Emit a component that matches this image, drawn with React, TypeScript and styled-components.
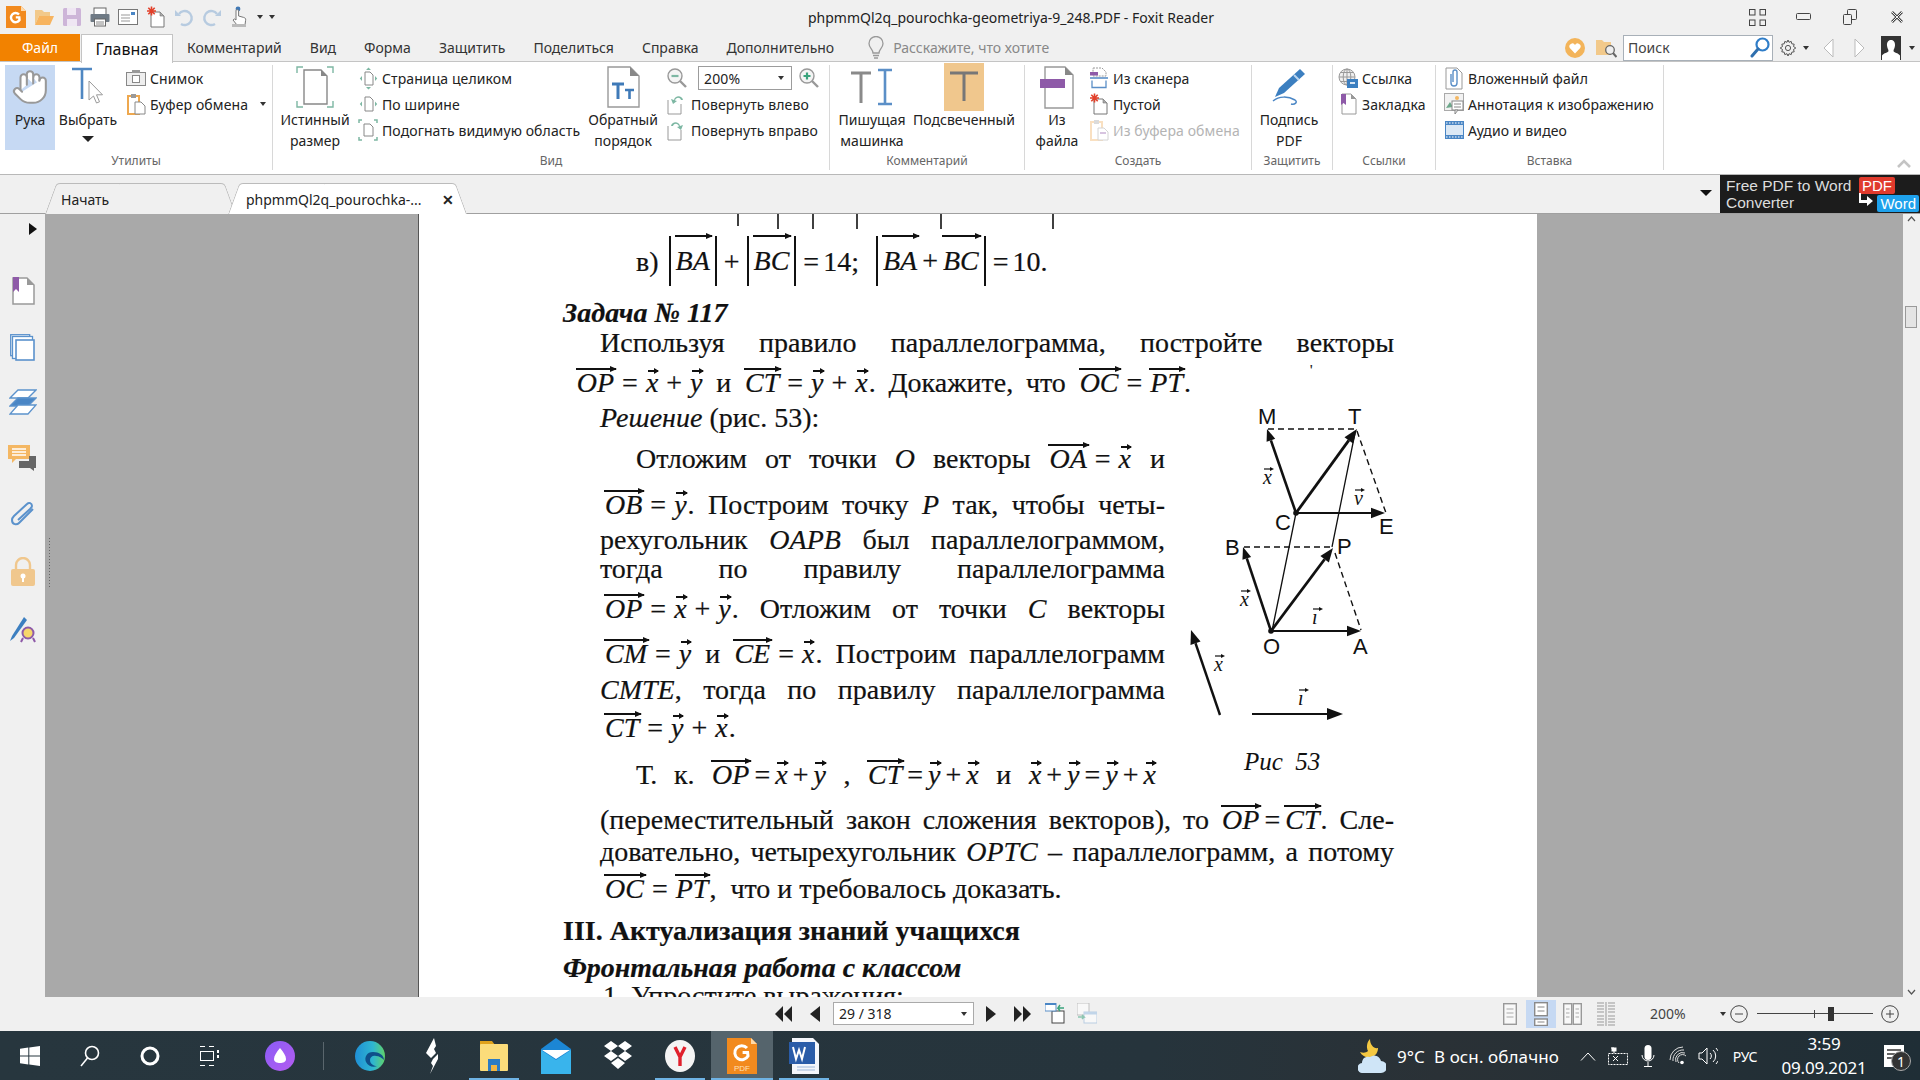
import React from "react";
import styled, { createGlobalStyle } from "styled-components";
import { Hand } from "lucide-react";

const Global = createGlobalStyle`
  html, body { margin: 0; padding: 0; overflow: hidden; background: #f0f0f0; }
  * { box-sizing: border-box; }
  svg { display: block; flex: none; }
`;
const UI = `"Noto Sans", "Open Sans", sans-serif`;

const Window = styled.div`
  width: 1920px; height: 1080px; display: flex; flex-direction: column; overflow: hidden;
  background: #f0f0f0; font-family: ${UI}; color: #222;
`;

/* ---------- title bar ---------- */
const TitleBar = styled.div`height: 34px; display: flex; align-items: center; flex: none;`;
const QuickAccess = styled.div`width: 808px; flex: none; display: flex; align-items: center; padding-left: 2px;`;
const QuickCell = styled.div<{ $w?: number }>`width: ${p => p.$w || 28}px; display: flex; align-items: center; justify-content: center; flex: none;`;
const TitleText = styled.div`font-size: 14px; color: #222; white-space: nowrap;`;
const WindowControls = styled.div`margin-left: auto; display: flex; align-items: center;`;
const WinCell = styled.div`width: 46.5px; display: flex; justify-content: center;`;

/* ---------- menu bar ---------- */
const MenuBar = styled.div`
  height: 28px; flex: none; display: flex; align-items: stretch; position: relative;
  border-bottom: 1px solid #c4c4c4; font-size: 14px;
`;
const FileTab = styled.div`
  width: 80px; background: #f28200; color: #fff; display: flex; align-items: center; justify-content: center; font-size: 14px; margin-right: 1px;
`;
const HomeTab = styled.div`
  width: 92px; height: 29px; background: #fff; border: 1px solid #c4c4c4; border-bottom: none; color: #111;
  display: flex; align-items: center; justify-content: center; font-size: 16px; margin-right: 0px; z-index: 1;
`;
const MenuItem = styled.div`padding: 0 14px; display: flex; align-items: center; white-space: nowrap; color: #333;`;
const TellMe = styled.div`display: flex; align-items: center; gap: 9px; margin-left: 20px; color: #888;`;
const TellMeText = styled.div`width: 165px; overflow: hidden; white-space: nowrap;`;
const MenuRight = styled.div`margin-left: auto; display: flex; align-items: center;`;
const ToolSlot = styled.div<{ $w: number }>`width: ${p => p.$w}px; display: flex; align-items: center; justify-content: center; gap: 6px;`;
const SearchBox = styled.div`
  width: 150px; height: 26px; border: 1px solid #a8b0b8; background: #fff; display: flex; align-items: center;
  justify-content: space-between; padding: 0 2px 0 4px; font-size: 14px; color: #444;
`;
const Caret = styled.span<{ $c?: string; $s?: number }>`
  display: inline-block; width: 0; height: 0; border-left: ${p => p.$s || 3.5}px solid transparent; border-right: ${p => p.$s || 3.5}px solid transparent;
  border-top: ${p => (p.$s || 3.5) + 0.5}px solid ${p => p.$c || "#333"}; flex: none;
`;

/* ---------- ribbon ---------- */
const Ribbon = styled.div`
  height: 113px; flex: none; background: #fff; display: flex; border-bottom: 1px solid #b8b8b8; padding-top: 3px; position: relative;
`;
const Group = styled.div<{ $w: number }>`
  width: ${p => p.$w}px; height: 105px; flex: none; display: flex; flex-direction: column; border-right: 1px solid #d8d8d8;
`;
const GroupBody = styled.div<{ $pl: number; $gap: number }>`
  height: 87px; display: flex; padding-left: ${p => p.$pl}px; gap: ${p => p.$gap}px; align-items: flex-start;
`;
const GroupLabel = styled.div`height: 18px; text-align: center; font-size: 12px; color: #666; line-height: 18px;`;
const LargeBtn = styled.div<{ $w: number; $on?: boolean }>`
  width: ${p => p.$w}px; height: 85px; display: flex; flex-direction: column; align-items: center; font-size: 14px; color: #222;
  line-height: 21px; text-align: center; background: ${p => (p.$on ? "#c6d9f3" : "transparent")}; white-space: nowrap;
`;
const BtnCaret = styled.div`margin-top: 6px; line-height: 0;`;
const IconArea = styled.div`height: 44px; display: flex; align-items: center; justify-content: center; flex: none;`;
const SmallCol = styled.div<{ $ml?: number }>`display: flex; flex-direction: column; margin-left: ${p => p.$ml || 0}px;`;
const SmallItem = styled.div<{ $off?: boolean }>`
  height: 26px; display: flex; align-items: center; gap: 4px; font-size: 14px; white-space: nowrap; letter-spacing: 0.1px;
  color: ${p => (p.$off ? "#b4b4b4" : "#222")};
`;
const IconSlot = styled.div`width: 20px; display: flex; justify-content: center; flex: none;`;
const ZoomCombo = styled.div`
  width: 94px; height: 24px; border: 1px solid #9c9c9c; margin: 0 3px 0 7px; display: flex; align-items: center;
  justify-content: space-between; padding: 0 7px 0 5px; font-size: 14px; color: #222;
`;
const Collapse = styled.div`position: absolute; right: 8px; bottom: 5px;`;

/* ---------- tabs ---------- */
const TabBar = styled.div`height: 39px; flex: none; display: flex; align-items: flex-end; position: relative; padding-left: 45px; border-bottom: 1px solid #a0a0a0;`;
const DocTab = styled.div<{ $on?: boolean; $w: number }>`
  width: ${p => p.$w}px; height: 31px; position: relative; display: flex; align-items: center; font-size: 14px;
  color: #222; margin-right: ${p => (p.$on ? 0 : -7)}px; padding: 1px 18px 0 ${p => (p.$on ? 18 : 16)}px; z-index: ${p => (p.$on ? 2 : 1)}; margin-bottom: -1px;
  &::before, &::after {
    content: ""; position: absolute; top: 0; bottom: 0; width: 55%; z-index: -1;
    background: ${p => (p.$on ? "#fff" : "#f0f0f0")}; border-top: 1px solid #bbb;
  }
  &::before { left: 0; transform: skewX(-20deg); transform-origin: bottom left; border-left: 1px solid #bbb; border-top-left-radius: 4px; }
  &::after { right: 0; transform: skewX(20deg); transform-origin: bottom right; border-right: 1px solid #bbb; border-top-right-radius: 4px; }
`;
const TabTitle = styled.span`white-space: nowrap;`;
const TabClose = styled.span`margin-left: auto; margin-right: -5px; font-size: 14px; font-weight: 700; color: #222;`;
const TabDrop = styled.div`margin-left: auto; margin-right: 8px; margin-bottom: 12px;`;
const Banner = styled.div`
  width: 200px; height: 38px; background: #1c1c1c; color: #ddd; font-size: 15.5px; line-height: 17px; padding: 2px 6px; position: relative; align-self: flex-end;
  font-family: "Liberation Sans", sans-serif; white-space: nowrap;
`;
const BannerBadge = styled.span<{ $c: string; $r: number; $t: number }>`
  position: absolute; right: ${p => p.$r}px; top: ${p => p.$t}px; background: ${p => p.$c}; color: #fff; padding: 0 3px; border-radius: 2px; font-size: 15px; line-height: 17px;
`;
const BannerArrow = styled.svg`position: absolute; right: 46px; top: 18px;`;

/* ---------- main ---------- */
const Main = styled.div`height: 783px; flex: none; display: flex; overflow: hidden;`;
const SideBar = styled.div`width: 45px; flex: none; display: flex; flex-direction: column; align-items: center; padding-top: 9px; position: relative;`;
const SideArrow = styled.div`margin: 0 0 42px 20px;`;
const SideIcons = styled.div`display: flex; flex-direction: column; gap: 28.6px; align-items: center;`;
const Canvas = styled.div<{ $w: number; $line?: boolean }>`
  width: ${p => p.$w}px; flex: none; background: #a9a9a9; position: relative;
  border-right: ${p => (p.$line ? "1px solid #555" : "none")};
`;
const SashDots = styled.div`
  position: absolute; left: 3px; top: 323px; width: 3px; height: 52px;
  background-image: radial-gradient(#666 0.7px, transparent 0.8px); background-size: 3px 3px;
`;
const Page = styled.div`
  width: 1118px; flex: none; background: #fff; overflow: hidden; padding: 0 143px 0 144px; position: relative;
  font-family: "Liberation Serif", serif; font-size: 28px; color: #111; line-height: 28px; -webkit-text-stroke: 0.2px #111;
`;
const TopMarks = styled.div`height: 16px;`;
const Line = styled.div<{ $mt?: number; $ind?: number; $j?: boolean; $pr?: number }>`
  height: 28px; margin-top: ${p => p.$mt || 0}px; padding-left: ${p => p.$ind || 0}px; padding-right: ${p => p.$pr || 0}px; white-space: nowrap; position: relative;
  ${p => (p.$j ? "text-align: justify; text-align-last: justify; white-space: normal;" : "")}
`;
const TaskTitle = styled(Line)`font-weight: 700; font-style: italic;`;
const HeadLine = styled(Line)`font-weight: 700;`;
const FigRow = styled.div`display: flex; margin-top: 7px;`;
const TextCol = styled.div`width: 602px; flex: none;`;
const Figure = styled.svg`margin-left: 15px; margin-top: 0; font-family: "Liberation Sans", sans-serif; -webkit-text-stroke: 0;`;
const Vec = styled.span`
  display: inline-block; position: relative; font-style: italic; padding: 0 1px;
  &::before { content: ""; position: absolute; left: 0; right: -1px; top: -1px; height: 1.5px; background: #111; }
  &::after { content: ""; position: absolute; right: -2px; top: -3.5px; border-left: 7px solid #111; border-top: 3px solid transparent; border-bottom: 3px solid transparent; }
`;
const Sym = styled.span`display: inline-block; position: relative; font-style: italic; padding: 0 1px;
  &::before { content: ""; position: absolute; left: 3px; right: 1px; top: 1px; height: 1.5px; background: #111; }
  &::after { content: ""; position: absolute; right: 0; top: -1px; border-left: 5px solid #111; border-top: 3px solid transparent; border-bottom: 3px solid transparent; }
`;
const Op = styled.span`margin: 0 7px;`;
const TightOp = styled.span`margin: 0 4px;`;
const Abs = styled.span`
  display: inline-block; height: 50px; line-height: 50px; vertical-align: middle; margin: -8px 3px 0;
  border-left: 2px solid #111; border-right: 2px solid #111; padding: 0 4px;
`;
const It = styled.i``;
const Scan = styled.span`position: absolute; left: 747px; top: -12px; font-size: 14px;`;
const Scroll = styled.div`width: 16px; flex: none; display: flex; flex-direction: column; align-items: center; justify-content: space-between; background: #f0f0f0; position: relative; padding: 2px 0 2px;`;
const Thumb = styled.div`position: absolute; top: 92px; left: 2px; width: 12px; height: 22px; background: #e4e4e4; border: 1px solid #999;`;

/* ---------- status bar ---------- */
const StatusBar = styled.div`height: 34px; flex: none; display: flex; align-items: center; padding-left: 775px; padding-bottom: 1px; background: #f0f0f0;`;
const StatusItem = styled.div<{ $ml: number }>`margin-left: ${p => p.$ml}px; display: flex; align-items: center; justify-content: center;`;
const PageBox = styled.div`
  width: 141px; height: 23px; border: 1px solid #aaa; background: #fff; font-size: 14px; color: #222; display: flex; align-items: center;
  justify-content: space-between; padding: 0 6px 0 5px; margin-left: 13px;
`;
const ViewSlot = styled.div<{ $w: number; $on?: boolean }>`
  width: ${p => p.$w}px; height: 28px; display: flex; align-items: center; justify-content: center; background: ${p => (p.$on ? "#c6d9f3" : "transparent")};
`;
const ZoomText = styled.div`margin-left: 28px; width: 66px; font-size: 14px; color: #444;`;
const Slider = styled.div`width: 116px; height: 18px; margin: 0 8px 0 9px; position: relative;
  &::before { content: ""; position: absolute; left: 0; right: 0; top: 8px; height: 1.5px; background: #444; }
`;
const SliderTick = styled.span`position: absolute; left: 57px; top: 5px; width: 1px; height: 8px; background: #444;`;
const SliderThumb = styled.span`position: absolute; left: 71px; top: 2px; width: 6px; height: 14px; background: #333;`;

/* ---------- taskbar ---------- */
const TaskBar = styled.div`
  height: 50px; flex: none; display: flex; align-items: stretch; color: #fff;
  background: linear-gradient(90deg, #27363e 0%, #26343c 60%, #2a3136 75%, #1f2e36 100%);
`;
const TaskSlot = styled.div<{ $w?: number; $active?: boolean; $open?: boolean }>`
  width: ${p => p.$w || 62}px; flex: none; display: flex; align-items: center; justify-content: center; position: relative;
  background: ${p => (p.$active ? "#55646c" : "transparent")};
  ${p => (p.$open ? `&::after { content: ""; position: absolute; left: 6px; right: 6px; bottom: 0; height: 3px; background: #6fb3e4; }` : "")}
  ${p => (p.$active && p.$open ? `&::after { left: 0; right: 0; }` : "")}
`;
const TaskSep = styled.div`width: 1px; height: 28px; background: #5a666d; align-self: center; margin: 0 15px 0 3px;`;
const Tray = styled.div`margin-left: auto; display: flex; align-items: center;`;
const Weather = styled.div`display: flex; align-items: center; gap: 11px; font-size: 17px; letter-spacing: 0.1px; white-space: nowrap; margin-right: 14px;`;
const TrayIcon = styled.div<{ $w: number }>`width: ${p => p.$w}px; display: flex; justify-content: center;`;
const Lang = styled.div`font-size: 14px; width: 42px; margin-left: 2px; text-align: center; letter-spacing: -0.3px;`;
const Clock = styled.div`width: 88px; margin-left: 14px; font-size: 17px; text-align: center; line-height: 24px; letter-spacing: -0.2px;`;
const Notif = styled.div`width: 52px; display: flex; justify-content: center; position: relative;`;
const NotifBadge = styled.span`
  position: absolute; left: 23px; top: 6px; width: 20px; height: 20px; border-radius: 50%; background: #333; border: 1px solid #aaa;
  display: flex; align-items: center; justify-content: center; font-size: 14px;
`;

/* ---------- icons ---------- */
const S = { g: "#8b8b8b", b: "#4a86c5", t: "#7db7a3", o: "#f4b763", p: "#8e5aa8" };

const LogoFoxit = () => (
  <svg width="20" height="22" viewBox="0 0 20 22"><path d="M0 0h15l5 5v17H0z" fill="#f28a1e" /><path d="M15 0v5h5z" fill="#ffd9a8" /><path d="M13 8.500a4.600 4.600 0 1 0 .5 5.500l-.2-2.600H9.800" fill="none" stroke="#fff" strokeWidth="2.400" /></svg>
);
const OpenFolder = () => (
  <svg width="20" height="20" viewBox="0 0 20 20"><path d="M1 3h7l2 2h6v4H5L1 18z" fill="#f2c98a" /><path d="M1 18l4-9h15l-4 9z" fill="#f7b45f" /></svg>
);
const SaveIcon = () => (
  <svg width="18" height="20" viewBox="0 0 18 20"><rect x="0" y="1" width="18" height="18" rx="1.500" fill="#cdb5d8" /><rect x="4" y="1" width="9" height="7" fill="#efe6f3" /><rect x="4" y="12" width="10" height="7" fill="#efe6f3" /></svg>
);
const PrintIcon = () => (
  <svg width="20" height="20" viewBox="0 0 20 20"><rect x="4" y="1" width="12" height="7" fill="#fff" stroke="#666" /><rect x="0.500" y="7" width="19" height="8" rx="1" fill="#6f7a85" /><rect x="4.500" y="12" width="11" height="7" fill="#fff" stroke="#666" /><path d="M6 15h8M6 17h8" stroke="#888" /></svg>
);
const PropsIcon = () => (
  <svg width="20" height="18" viewBox="0 0 20 18"><rect x="0.500" y="1.500" width="19" height="15" fill="#fff" stroke="#777" /><path d="M3 7h9M3 10h9M3 13h9" stroke="#999" /><rect x="13" y="4" width="4" height="3" fill="#4a86c5" /></svg>
);
const NewIcon = () => (
  <svg width="20" height="22" viewBox="0 0 20 22"><path d="M5 6h9l4 4v11H5z" fill="#fff" stroke="#777" /><path d="M14 6v4h4" fill="#aaa" stroke="#777" strokeWidth=".6" /><g stroke="#e2402a" strokeWidth="1.600"><path d="M1 5h9M5.500.5v9M2.300 1.800l6.400 6.400M8.700 1.800L2.300 8.200" /></g></svg>
);
const UndoIcon = ({ flip }: { flip?: boolean }) => (
  <svg width="20" height="20" viewBox="0 0 20 20"><g transform={flip ? "matrix(-1 0 0 1 20 0)" : undefined} fill="none" stroke="#b7cbe0" strokeWidth="2.400"><path d="M5 7a7 7 0 1 1 2 10" /><path d="M1 3v6h6" fill="#b7cbe0" stroke="none" /></g></svg>
);
const TouchIcon = () => (
  <svg width="18" height="22" viewBox="0 0 18 22"><circle cx="7" cy="3" r="2.400" fill="#3f78b5" /><path d="M5 10V4.500c0-1 2.600-1 2.600 0V10l5 1.400c1.500.5 2.400 1 2 3L14 19H6l-4-5 1.500-1 1.500 1z" fill="#fff" stroke="#777" /><rect x="1" y="18" width="14" height="3" fill="#bbb" /></svg>
);
const Fullscreen = () => (
  <svg width="17" height="17" viewBox="0 0 17 17" fill="none" stroke="#444"><rect x=".5" y=".5" width="5.500" height="5.500" /><rect x="11" y=".5" width="5.500" height="5.500" /><rect x=".5" y="11" width="5.500" height="5.500" /><rect x="11" y="11" width="5.500" height="5.500" /></svg>
);
const MinIcon = () => (<svg width="15" height="8" viewBox="0 0 15 8"><rect x=".5" y=".5" width="14" height="6" rx="1" fill="none" stroke="#444" /></svg>);
const RestoreIcon = () => (<svg width="14" height="16" viewBox="0 0 14 16" fill="none" stroke="#444"><rect x="4.500" y=".5" width="9" height="10" rx="1" /><rect x=".5" y="5.500" width="8" height="10" rx="1" fill="#f0f0f0" /></svg>);
const CloseIcon = () => (<svg width="14" height="14" viewBox="0 0 14 14"><path d="M2 2l10 10M12 2L2 12" stroke="#444" strokeWidth="2.600" /><path d="M2 2l10 10M12 2L2 12" stroke="#f0f0f0" strokeWidth="1" /></svg>);
const Bulb = () => (<svg width="16" height="24" viewBox="0 0 16 24" fill="none" stroke="#999" strokeWidth="1.300"><path d="M5 17c0-4-4-5-4-9.500a7 7 0 0 1 14 0C15 12 11 13 11 17z" /><path d="M5 19.500h6M6 22h4" /></svg>);
const Heart = () => (<svg width="20" height="20" viewBox="0 0 20 20"><circle cx="10" cy="10" r="10" fill="#f3b45a" /><path d="M10 15.500L4.800 10a3 3 0 0 1 5.200-3 3 3 0 0 1 5.200 3z" fill="#fff" /></svg>);
const FolderSearch = () => (<svg width="21" height="22" viewBox="0 0 21 22"><path d="M0 3h6l2 2h7v13H0z" fill="#f2c98a" /><circle cx="14" cy="13" r="4.300" fill="#eee" stroke="#666" strokeWidth="1.300" /><path d="M17 16l3.500 4" stroke="#666" strokeWidth="2" /></svg>);
const SearchGlass = () => (<svg width="20" height="22" viewBox="0 0 20 22" fill="none"><circle cx="12.500" cy="7.500" r="6" stroke="#2f7dc8" strokeWidth="2.200" /><path d="M8 12l-6 7" stroke="#2f6fae" strokeWidth="3" strokeLinecap="round" /></svg>);
const Gear = () => (<svg width="18" height="18" viewBox="0 0 18 18" fill="none" stroke="#555"><circle cx="9" cy="9" r="2.600" /><path d="M9 1l1 2.300 2.200-.9.6 2.400 2.400.4-.7 2.300L16.800 9l-2.300 1.500.7 2.300-2.400.4-.6 2.400-2.200-.9L9 17l-1-2.300-2.200.9-.6-2.400-2.400-.4.7-2.300L1.200 9l2.300-1.500-.7-2.300 2.400-.4.6-2.400 2.200.9z" /></svg>);
const NavArrow = ({ flip }: { flip?: boolean }) => (<svg width="11" height="20" viewBox="0 0 11 20"><path d={flip ? "M1 1l9 9-9 9z" : "M10 1L1 10l9 9z"} fill="#fff" stroke="#bbb" /></svg>);
const Avatar = () => (<svg width="20" height="24" viewBox="0 0 20 24"><rect width="20" height="24" fill="#333" /><path d="M10 4c3 0 4.200 2.500 4 5.500-.2 2.500-1.500 4-1.500 5.500 0 1.500 5 2 6.500 4.500V24H1v-4.500C2.500 17 7.500 16.500 7.500 15c0-1.500-1.300-3-1.500-5.500C5.800 6.500 7 4 10 4z" fill="#fff" /></svg>);

const SelectBig = () => (
  <svg width="36" height="42" viewBox="0 0 36 42"><path d="M2 3h20M12 3v30" stroke="#4f87c2" strokeWidth="2.600" fill="none" /><path d="M19 15v19l4.500-4 3 7 3-1.200-3-7h6z" fill="#fff" stroke="#999" /></svg>
);
const Snapshot = () => (
  <svg width="20" height="18" viewBox="0 0 20 18"><rect x=".5" y="3.500" width="19" height="13" fill="#eee" stroke="#888" /><rect x="6" y="1" width="8" height="3" fill="#999" /><rect x="6.500" y="6.500" width="7" height="7" fill="#fff" stroke="#888" /></svg>
);
const Clipboard = ({ off }: { off?: boolean }) => (
  <svg width="19" height="22" viewBox="0 0 19 22" opacity={off ? 0.35 : 1}><rect x="1" y="3" width="11" height="18" fill="none" stroke="#eea84f" strokeWidth="2" /><rect x="4" y="1" width="5" height="4" fill="#999" /><path d="M8 9h6l4 4v8H8z" fill="#fff" stroke="#888" /><path d="M10 14h6" stroke={off ? S.p : "#fff"} strokeWidth="2" /></svg>
);
const TrueSize = () => (
  <svg width="38" height="42" viewBox="0 0 38 42"><g fill="none" stroke={S.t} strokeWidth="1.400"><path d="M1 7V1h6M31 1h6v6M1 35v6h6M31 41h6v-6" /></g><path d="M8 4h17l6 6v28H8z" fill="#fff" stroke="#888" strokeWidth="1.400" /><path d="M25 4v6h6z" fill="#888" /></svg>
);
const FitPage = () => (
  <svg width="19" height="23" viewBox="0 0 19 23"><path d="M6 5h5l3 3v10H6z" fill="#fff" stroke="#888" /><path d="M7 3l2.500-2.500L12 3zM7 20l2.500 2.500L12 20z" fill={S.t} /><path d="M3 9L.8 11.500 3 14zM16 9l2.200 2.500L16 14z" fill={S.t} /></svg>
);
const FitWidth = () => (
  <svg width="19" height="18" viewBox="0 0 19 18"><path d="M6 2h5l3 3v11H6z" fill="#fff" stroke="#888" /><path d="M3 6.500L.8 9 3 11.500zM16 6.500L18.200 9 16 11.500z" fill={S.t} /></svg>
);
const FitVisible = () => (
  <svg width="20" height="22" viewBox="0 0 20 22"><path d="M6 5h6l3 3v9H6z" fill="#fff" stroke="#888" /><g fill="none" stroke={S.t} strokeWidth="1.500"><path d="M1 4V1h3M16 1h3v3M1 18v3h3M16 21h3v-3" /></g></svg>
);
const Reverse = () => (
  <svg width="33" height="42" viewBox="0 0 33 42"><path d="M1 1h22l9 9v31H1z" fill="#fff" stroke="#999" strokeWidth="1.400" /><path d="M23 1v9h9z" fill="#888" /><path d="M5 18h12M11 18v15" stroke="#3f7ab8" strokeWidth="3" /><path d="M18 24h9M22.500 24v9" stroke="#3f7ab8" strokeWidth="2.600" /></svg>
);
const ZoomGlass = ({ plus }: { plus?: boolean }) => (
  <svg width="20" height="22" viewBox="0 0 20 22" fill="none"><circle cx="8" cy="9" r="7" stroke="#999" fill="#f4f4f4" strokeWidth="1.400" /><path d="M13 14l6 6" stroke="#999" strokeWidth="2.400" /><path d={plus ? "M4.500 9h7M8 5.500v7" : "M4.500 9h7"} stroke={plus ? "#3aa37c" : "#7db7a3"} strokeWidth="2.200" /></svg>
);
const Rotate = ({ right }: { right?: boolean }) => (
  <svg width="20" height="22" viewBox="0 0 20 22"><path d="M1 7v14h13V11" fill="#fff" stroke="#999" /><path d={right ? "M4 7c1-5 8-5 9 0l3-1-2 5-4-3 2-.5C11 4 7 4 6 7z" : "M16 7C15 2 8 2 7 7l-3-1 2 5 4-3-2-.5C9 4 13 4 14 7z"} fill={S.t} /></svg>
);
const Typewriter = () => (
  <svg width="44" height="38" viewBox="0 0 44 38"><path d="M1 5h20M11 5v30" stroke="#8a8a8a" strokeWidth="3" fill="none" /><path d="M28 2h7M42 2h-7M35 2v34M28 36h14" stroke="#5b8fc7" strokeWidth="2.600" fill="none" /></svg>
);
const Highlight = () => (
  <svg width="40" height="48" viewBox="0 0 40 48"><rect width="40" height="48" fill="#f0c78d" /><path d="M6 10h28M20 10v28" stroke="#777" strokeWidth="3" /></svg>
);
const FromFile = () => (
  <svg width="34" height="43" viewBox="0 0 34 43"><path d="M5 1h20l8 8v33H5z" fill="#fff" stroke="#999" strokeWidth="1.400" /><path d="M25 1v8h8z" fill="#888" /><rect x="0" y="13" width="25" height="9" fill="#8e5aa8" /></svg>
);
const Scanner = () => (
  <svg width="18" height="22" viewBox="0 0 18 22"><path d="M3 1h9l4 4v4H3z" fill="#fff" stroke="#999" strokeDasharray="2 1" /><rect x="0" y="5" width="8" height="3.500" fill="#8e5aa8" /><path d="M0 11h18" stroke="#5b8fc7" strokeWidth="1.600" /><path d="M2 13.500v7h14v-7" fill="none" stroke="#5b8fc7" strokeWidth="1.300" /></svg>
);
const Sign = () => (
  <svg width="38" height="40" viewBox="0 0 38 40"><path d="M30 2l5 5L14 26l-9 4 4-9z" fill="#3c7fc0" /><path d="M24 8l5 5" stroke="#bcd6ef" strokeWidth="2" /><path d="M3 34c6-5 15-5 22-1 3 2 0 5-4 4" fill="none" stroke="#4a86c5" strokeWidth="1.500" /></svg>
);
const LinkIcon = () => (
  <svg width="20" height="20" viewBox="0 0 20 20"><circle cx="9" cy="9" r="8" fill="#eee" stroke="#999" /><path d="M1 9h16M9 1v16M3 4.500h12M3 13.500h12" stroke="#999" /><ellipse cx="9" cy="9" rx="3.800" ry="8" fill="none" stroke="#999" /><rect x="9" y="11" width="11" height="9" fill="#3c7fc0" /><path d="M12 15h5" stroke="#fff" strokeWidth="1.600" /></svg>
);
const BookmarkIcon = () => (
  <svg width="17" height="22" viewBox="0 0 17 22"><path d="M2 1h9l5 5v15H2z" fill="#fff" stroke="#999" /><path d="M1 1h5v11L3.500 10 1 12z" fill="#8e5aa8" /><path d="M11 1v5h5z" fill="#999" /></svg>
);
const AttachFile = () => (
  <svg width="18" height="23" viewBox="0 0 18 23"><path d="M1 1h11l5 5v16H1z" fill="#fff" stroke="#999" /><path d="M6 7v9a3 3 0 0 0 6 0V5a2 2 0 0 0-4 0v10" fill="none" stroke="#5b8fc7" strokeWidth="1.400" /></svg>
);
const ImageAnno = () => (
  <svg width="20" height="22" viewBox="0 0 20 22"><rect x=".5" y=".5" width="19" height="17" fill="#f2f2f2" stroke="#aaa" /><path d="M2 15l4-6 3 5z" fill="#6da88b" /><circle cx="13" cy="5" r="2" fill="#f4b763" /><rect x="8" y="8" width="11" height="9" fill="#fff" stroke="#888" /><path d="M10 11h7M10 14h7" stroke="#888" /><path d="M11 17v4l3-4z" fill="#fff" stroke="#888" /></svg>
);
const VideoIcon = () => (
  <svg width="19" height="18" viewBox="0 0 19 18"><rect x=".5" y=".5" width="18" height="17" fill="#dbe8f5" stroke="#4a86c5" /><rect x="0" y="0" width="19" height="4" fill="#4a86c5" /><rect x="0" y="14" width="19" height="4" fill="#4a86c5" /><path d="M1 2h17M1 16h17" stroke="#fff" strokeDasharray="1.500 1.500" /></svg>
);
const Chevron = () => (<svg width="16" height="10" viewBox="0 0 16 10"><path d="M2 8l6-6 6 6" fill="none" stroke="#c4c4c4" strokeWidth="2.600" /></svg>);

const SideArrowIcon = () => (<svg width="8" height="12" viewBox="0 0 8 12"><path d="M0 0l8 6-8 6z" fill="#111" /></svg>);
const SideBookmarks = () => (<svg width="24" height="28" viewBox="0 0 24 28"><path d="M2 1h14l7 7v19H2z" fill="#fff" stroke="#999" strokeWidth="1.500" /><path d="M16 1v7h7z" fill="#999" /><path d="M2 0h6v15l-3-3-3 3z" fill="#8e5aa8" /></svg>);
const SidePages = () => (<svg width="25" height="27" viewBox="0 0 25 27" fill="#fff" stroke="#5b92cc" strokeWidth="1.300"><rect x=".7" y=".7" width="19" height="21" /><rect x="2.500" y="2.500" width="20" height="22" /><rect x="6" y="6" width="18" height="20" strokeWidth="1.600" /></svg>);
const SideLayers = () => (<svg width="28" height="26" viewBox="0 0 28 26" fill="none" stroke="#5b92cc" strokeWidth="1.300"><path d="M9 1h18l-8 8H1z" fill="#fff" /><path d="M9 9h18l-8 8H1z" fill="#4a86c5" /><path d="M9 16h18l-8 9H1z" fill="#fff" /></svg>);
const SideComments = () => (<svg width="29" height="28" viewBox="0 0 29 28"><path d="M0 1h22v14H8l-4 4v-4H0z" fill="#f4b763" /><path d="M4 5h14M4 8h14M4 11h14" stroke="#fff" strokeWidth="1.500" /><path d="M11 17h10v-5h7v12h-2v3l-4-3H11z" fill="#666" /></svg>);
const SideClip = () => (<svg width="26" height="28" viewBox="0 0 26 28" fill="none" stroke="#5b92cc" strokeWidth="2"><path d="M23 9L9 23c-2 2-7 2-7-3 0-2 1-3 2-4L17 4c2-2 5-1 5 2 0 1-1 2-2 3L8 20" /></svg>);
const SideLock = () => (<svg width="24" height="30" viewBox="0 0 24 30"><path d="M5 13V8a7 7 0 0 1 14 0v5" fill="none" stroke="#f0c78d" strokeWidth="2.400" /><rect x="0" y="12" width="24" height="17" rx="2" fill="#f0c78d" /><circle cx="12" cy="19" r="2.500" fill="#fff" /><rect x="11" y="20" width="2" height="5" fill="#fff" /></svg>);
const SideSign = () => (<svg width="27" height="27" viewBox="0 0 27 27"><path d="M15 1l3 3L5 22l-4 3 2-5z" fill="#3c7fc0" /><circle cx="19" cy="17" r="5.500" fill="#f6d66a" stroke="#8e5aa8" strokeWidth="2" /><path d="M14 22l-2 4M24 22l2 4" stroke="#8e5aa8" strokeWidth="2" /></svg>);

const ArrowUp = ({ down }: { down?: boolean }) => (<svg width="9" height="6" viewBox="0 0 9 6"><path d={down ? "M1 1l3.500 4L8 1" : "M1 5l3.500-4L8 5"} fill="none" stroke="#555" strokeWidth="1.200" /></svg>);
const First = ({ last }: { last?: boolean }) => (<svg width="17" height="16" viewBox="0 0 17 16" fill="#222">{last ? <><path d="M0 0l8 8-8 8z" /><path d="M9 0l8 8-8 8z" /></> : <><path d="M8 0L0 8l8 8z" /><path d="M17 0L9 8l8 8z" /></>}</svg>);
const Prev = ({ next }: { next?: boolean }) => (<svg width="10" height="16" viewBox="0 0 10 16"><path d={next ? "M0 0l10 8-10 8z" : "M10 0L0 8l10 8z"} fill="#222" /></svg>);
const GoBack = () => (<svg width="20" height="21" viewBox="0 0 20 21"><rect x="7" y="8" width="12" height="12" fill="#fff" stroke="#444" /><rect x="0" y="0" width="11" height="8" fill="#fff" stroke="#5b8fc7" /><rect x="0" y="0" width="11" height="2" fill="#4a86c5" /><path d="M19 5h-6l2-3M13 5l2 3" fill="none" stroke="#3aa37c" strokeWidth="1.500" /></svg>);
const GoFwd = () => (<svg width="20" height="21" viewBox="0 0 20 21" opacity=".55"><rect x="0" y="0" width="12" height="12" fill="#fff" stroke="#999" /><rect x="7" y="9" width="13" height="11" fill="#fff" stroke="#8fb3d8" /><rect x="7" y="9" width="13" height="2.500" fill="#9cc0e4" /><path d="M1 14h6l-2-2M7 14l-2 2" fill="none" stroke="#3aa37c" strokeWidth="1.500" /></svg>);
const ViewSingle = () => (<svg width="14" height="22" viewBox="0 0 14 22"><rect x=".7" y=".7" width="12.600" height="20.600" fill="#f8f8f8" stroke="#999" strokeWidth="1.400" /><path d="M3.500 6h7M3.500 10h7M3.500 14h7" stroke="#aaa" /></svg>);
const ViewCont = () => (<svg width="14" height="24" viewBox="0 0 14 24"><rect x=".7" y=".7" width="12.600" height="13" fill="#fff" stroke="#8a8a8a" strokeWidth="1.400" /><rect x=".7" y="17" width="12.600" height="6.500" fill="#fff" stroke="#8a8a8a" strokeWidth="1.400" /><path d="M3.500 5h7M3.500 9h7M3.500 20h7" stroke="#888" /></svg>);
const ViewFacing = () => (<svg width="19" height="22" viewBox="0 0 19 22" fill="#f8f8f8" stroke="#999" strokeWidth="1.400"><rect x=".7" y=".7" width="8" height="20.600" /><rect x="10.300" y=".7" width="8" height="20.600" /><path d="M3 6h3.500M3 10h3.500M3 14h3.500M12.500 6h3.500M12.500 10h3.500M12.500 14h3.500" strokeWidth="1" stroke="#aaa" /></svg>);
const ViewFacingCont = () => (<svg width="20" height="24" viewBox="0 0 20 24" fill="none" stroke="#999"><path d="M1 1h7M12 1h7M1 4h7M12 4h7M1 7h7M12 7h7M1 10h7M12 10h7M1 14h7M12 14h7M1 17h7M12 17h7M1 20h7M12 20h7M1 23h7M12 23h7" /><path d="M10 0v24" /></svg>);
const Circle = ({ plus }: { plus?: boolean }) => (<svg width="18" height="18" viewBox="0 0 18 18" fill="none" stroke="#444"><circle cx="9" cy="9" r="8.300" /><path d={plus ? "M5 9h8M9 5v8" : "M5 9h8"} /></svg>);

const WinLogo = () => (<svg width="20" height="20" viewBox="0 0 20 20" fill="#fff"><path d="M0 2.800L8.300 1.600v8H0zM9.300 1.500L20 0v9.600H9.300zM0 10.500h8.300v8L0 17.200zM9.300 10.500H20V20L9.300 18.500z" /></svg>);
const TaskSearch = () => (<svg width="20" height="22" viewBox="0 0 20 22" fill="none" stroke="#fff" strokeWidth="1.600"><circle cx="12" cy="8" r="6.500" /><path d="M7.500 13L1 21" /></svg>);
const Cortana = () => (<svg width="20" height="20" viewBox="0 0 20 20"><circle cx="10" cy="10" r="8" fill="none" stroke="#fff" strokeWidth="3" /></svg>);
const TaskView = () => (<svg width="20" height="22" viewBox="0 0 20 22" fill="none" stroke="#fff"><path d="M0 1.500h5M9 1.500h5M0 20.500h5M9 20.500h5" /><rect x=".5" y="6.500" width="13" height="9" /><path d="M18 5v3M18 10v3" strokeWidth="2" /></svg>);
const Alice = () => (<svg width="30" height="30" viewBox="0 0 30 30"><defs><linearGradient id="al" x1="0" y1="0" x2="1" y2="1"><stop offset="0" stopColor="#8a5cf6" /><stop offset="1" stopColor="#b45cf0" /></linearGradient></defs><circle cx="15" cy="15" r="15" fill="url(#al)" /><path d="M15 7c3.500 4 6 8 6 11 0 3-3 4-6 4s-6-1-6-4c0-3 2.500-7 6-11z" fill="#fff" /></svg>);
const Edge = () => (<svg width="30" height="32" viewBox="0 0 30 32"><defs><linearGradient id="ed" x1="0" y1="0" x2="1" y2="0"><stop offset="0" stopColor="#1f8fd6" /><stop offset=".6" stopColor="#2fb6d0" /><stop offset="1" stopColor="#5fd26a" /></linearGradient></defs><circle cx="15" cy="16" r="15" fill="url(#ed)" /><path d="M29 20c0-5-5-8-11-8-6 0-9 5-7 10 2 4 7 6 11 4-3 0-7-2-7-6 0-3 3-5 6-4 3 0 6 2 8 4z" fill="#0f4f8a" /></svg>);
const SIcon = () => (<svg width="14" height="36" viewBox="0 0 14 36" fill="#fff"><path d="M9 0L1 15l5 5 5-5-2-4 2-3z" /><path d="M13 16l-5 5-2 4 2 3-3 8 8-15z" /></svg>);
const Explorer = () => (<svg width="28" height="32" viewBox="0 0 28 32"><path d="M0 1h12l3 4H0z" fill="#e0a21b" /><rect y="4" width="28" height="27" rx="1" fill="#fbdc7a" /><rect x="8" y="19" width="12" height="12" fill="#2b7cc4" /><rect x="11" y="25" width="6" height="6" fill="#f2b642" /></svg>);
const MailIcon = () => (<svg width="30" height="36" viewBox="0 0 30 36"><path d="M15 0l15 11v25H0V11z" fill="#1c86d4" /><path d="M1 12h28L15 21z" fill="#fff" /><path d="M0 12l15 10 15-10v24H0z" fill="#39b4ec" /></svg>);
const Dropbox = () => (<svg width="30" height="30" viewBox="0 0 30 30" fill="#fff"><path d="M8 0l7 5-7 5-7-5zM22 0l7 5-7 5-7-5zM8 10l7 5-7 5-7-5zM22 10l7 5-7 5-7-5zM15 17l7 5-7 6-7-6z" /></svg>);
const Yandex = () => (<svg width="30" height="32" viewBox="0 0 30 32"><ellipse cx="15" cy="16" rx="15" ry="16" fill="#f4f4f4" /><path d="M10 7l5 10 5-10M15 17v9" fill="none" stroke="#e0202c" strokeWidth="3.400" /></svg>);
const FoxitTask = () => (<svg width="30" height="36" viewBox="0 0 30 36"><path d="M0 0h24l6 6v30H0z" fill="#f28a1e" /><path d="M24 0v6h6z" fill="#ffd9a8" /><path d="M20 10a7 7 0 1 0 1 8l-.4-3.400h-5" fill="none" stroke="#fff" strokeWidth="3" /><text x="15" y="33" textAnchor="middle" fontSize="8" fontFamily="Liberation Sans" fill="#ffe0b8">PDF</text></svg>);
const WordIcon = () => (<svg width="30" height="36" viewBox="0 0 30 36"><path d="M3 0h21l6 6v30H3z" fill="#f4f6fb" /><rect x="0" y="4" width="26" height="22" fill="#2a5ca8" /><path d="M4 9l3 12 3-9 3 9 3-12" fill="none" stroke="#fff" strokeWidth="2" /><path d="M8 29h18M8 32h18" stroke="#9fb8da" /></svg>);

const Cloud = () => (<svg width="28" height="34" viewBox="0 0 28 34"><path d="M12 0c-3 3-4 8-2 12-2 2-5 2-8 1 2 4 6 6 11 5 5-1 7-5 7-9-4 1-8-3-8-9z" fill="#f4c842" /><path d="M5 34a5 5 0 0 1-1-10 6 6 0 0 1 8-6 7 7 0 0 1 11 4 6 6 0 0 1 0 12z" fill="#cfe5f7" /></svg>);
const TrayUp = () => (<svg width="16" height="9" viewBox="0 0 16 9" fill="none" stroke="#fff"><path d="M1 8.500L8 1l7 7.500" /></svg>);
const Battery = () => (<svg width="20" height="18" viewBox="0 0 20 18" fill="none" stroke="#fff"><rect x=".5" y="6.500" width="19" height="11" strokeDasharray="2 1" /><path d="M6 1v5M6 1h-3M5 9l5 5M10 9l-5 5" /><rect x="4" y="1" width="4" height="3" fill="#fff" /></svg>);
const Mic = () => (<svg width="14" height="22" viewBox="0 0 14 22"><rect x="3.500" y="0" width="7" height="15" rx="3.500" fill="#fff" /><path d="M1 10a6 6 0 0 0 12 0M7 17v4M3 21.500h8" fill="none" stroke="#fff" /></svg>);
const Wifi = () => (<svg width="20" height="20" viewBox="0 0 20 20" fill="none" stroke="#ddd"><path d="M1 14A13 13 0 0 1 14 1M4 15A10 10 0 0 1 15 4M7 16a7 7 0 0 1 9-9M10 17a4 4 0 0 1 7-7" /><circle cx="13" cy="16.500" r="1.800" fill="#fff" stroke="none" /></svg>);
const Speaker = () => (<svg width="20" height="20" viewBox="0 0 20 20" fill="none" stroke="#fff"><path d="M1 7h3l5-5v16l-5-5H1z" /><path d="M12 7a4 4 0 0 1 0 6M15 4a8 8 0 0 1 0 12M18 2a11 11 0 0 1 0 16" /></svg>);
const Note = () => (<svg width="20" height="22" viewBox="0 0 20 22"><path d="M0 0h20v16L14 22H0z" fill="#fff" /><path d="M3 5h14M3 9h14M3 13h9" stroke="#333" strokeWidth="1.500" /></svg>);

const Arrow: React.FC<{ x1: number; y1: number; x2: number; y2: number; w?: number; h?: number }> = ({ x1, y1, x2, y2, w = 2.6, h = 12 }) => {
  const a = Math.atan2(y2 - y1, x2 - x1);
  const b = h * 0.38;
  const bx = x2 - h * Math.cos(a), by = y2 - h * Math.sin(a);
  const p = `${x2},${y2} ${bx + b * Math.sin(a)},${by - b * Math.cos(a)} ${bx - b * Math.sin(a)},${by + b * Math.cos(a)}`;
  return (<g><line x1={x1} y1={y1} x2={bx} y2={by} stroke="#111" strokeWidth={w} /><polygon points={p} fill="#111" /></g>);
};
const FigSym: React.FC<{ x: number; y: number; c: string }> = ({ x, y, c }) => (
  <g>
    <text x={x} y={y} fontFamily="Liberation Serif" fontStyle="italic" fontSize="20" fill="#111">{c}</text>
    <path d={`M${x + 1} ${y - 15}h8`} stroke="#111" strokeWidth="1.200" /><path d={`M${x + 11} ${y - 15}l-4 -2v4z`} fill="#111" />
  </g>
);
const Fig53 = () => (
  <Figure width="240" height="377" viewBox="0 23 240 377">
    <g fill="none" stroke="#111" strokeWidth="1.400" strokeDasharray="6 4">
      <path d="M88 48H177M177 50L206 132M64 166H152M155 172L181 249" />
    </g>
    <path d="M92 250L116 132M152 166L175 52" stroke="#111" strokeWidth="1.300" />
    <Arrow x1={116} y1={132} x2={87} y2={48} />
    <Arrow x1={116} y1={132} x2={177} y2={48} w={2.800} h={14} />
    <Arrow x1={116} y1={132} x2={205} y2={132} w={2.200} h={14} />
    <Arrow x1={91} y1={250} x2={63} y2={166} />
    <Arrow x1={91} y1={250} x2={153} y2={167} w={2.800} h={14} />
    <Arrow x1={91} y1={250} x2={181} y2={250} w={2.200} h={14} />
    <Arrow x1={40} y1={334} x2={11} y2={249} w={2.400} h={14} />
    <Arrow x1={72} y1={333} x2={163} y2={333} w={2.200} h={16} />
    <circle cx="116" cy="132" r="2.800" fill="#111" /><circle cx="91" cy="250" r="2.800" fill="#111" />
    <g fontSize="22" fill="#111">
      <text x="78" y="43">M</text><text x="168" y="43">T</text><text x="95" y="149">C</text><text x="199" y="153">E</text>
      <text x="45" y="174">B</text><text x="157" y="173">P</text><text x="83" y="273">O</text><text x="173" y="273">A</text>
    </g>
    <FigSym x={83} y={103} c="x" /><FigSym x={60} y={225} c="x" /><FigSym x={34} y={290} c="x" />
    <FigSym x={174} y={124} c="v" /><FigSym x={132} y={243} c="ı" /><FigSym x={118} y={324} c="ı" />
    <text x="64" y="389" fontFamily="Liberation Serif" fontStyle="italic" fontSize="25" fill="#111">{"Рис\u00a0\u00a053"}</text>
  </Figure>
);

const Bars = () => (
  <svg width="560" height="15" viewBox="0 0 560 15" stroke="#111" strokeWidth="1.600">
    <path d="M175 0v12M215 0v15M250 0v15M294 0v15M378 0v15M490 0v15" />
  </svg>
);

export default function App() {
  return (
    <Window>
      <Global />
      <TitleBar>
        <QuickAccess>
          <QuickCell><LogoFoxit /></QuickCell><QuickCell><OpenFolder /></QuickCell><QuickCell><SaveIcon /></QuickCell><QuickCell><PrintIcon /></QuickCell>
          <QuickCell><PropsIcon /></QuickCell><QuickCell><NewIcon /></QuickCell><QuickCell><UndoIcon /></QuickCell><QuickCell><UndoIcon flip /></QuickCell>
          <QuickCell><TouchIcon /></QuickCell>
          <QuickCell $w={11}><Caret /></QuickCell><QuickCell $w={14}><Caret /></QuickCell>
        </QuickAccess>
        <TitleText>phpmmQl2q_pourochka-geometriya-9_248.PDF - Foxit Reader</TitleText>
        <WindowControls>
          <WinCell><Fullscreen /></WinCell><WinCell><MinIcon /></WinCell><WinCell><RestoreIcon /></WinCell><WinCell><CloseIcon /></WinCell>
        </WindowControls>
      </TitleBar>

      <MenuBar>
        <FileTab>Файл</FileTab>
        <HomeTab>Главная</HomeTab>
        {["Комментарий", "Вид", "Форма", "Защитить", "Поделиться", "Справка", "Дополнительно"].map(t => <MenuItem key={t}>{t}</MenuItem>)}
        <TellMe><Bulb /><TellMeText>Расскажите, что хотите</TellMeText></TellMe>
        <MenuRight>
          <ToolSlot $w={30}><Heart /></ToolSlot>
          <ToolSlot $w={33}><FolderSearch /></ToolSlot>
          <SearchBox>Поиск<SearchGlass /></SearchBox>
          <ToolSlot $w={42}><Gear /><Caret /></ToolSlot>
          <ToolSlot $w={26}><NavArrow /></ToolSlot>
          <ToolSlot $w={37}><NavArrow flip /></ToolSlot>
          <ToolSlot $w={26}><Avatar /></ToolSlot>
          <ToolSlot $w={16}><Caret /></ToolSlot>
        </MenuRight>
      </MenuBar>

      <Ribbon>
        <Group $w={273}>
          <GroupBody $pl={5} $gap={5}>
            <LargeBtn $w={50} $on><IconArea><Hand size={38} color="#999" fill="#fff" strokeWidth={1.300} /></IconArea>Рука</LargeBtn>
            <LargeBtn $w={56}><IconArea><SelectBig /></IconArea>Выбрать<BtnCaret><Caret $s={6} $c="#222" /></BtnCaret></LargeBtn>
            <SmallCol $ml={5}>
              <SmallItem><IconSlot><Snapshot /></IconSlot>Снимок</SmallItem>
              <SmallItem><IconSlot><Clipboard /></IconSlot>Буфер обмена &nbsp;<Caret /></SmallItem>
            </SmallCol>
          </GroupBody>
          <GroupLabel>Утилиты</GroupLabel>
        </Group>
        <Group $w={557}>
          <GroupBody $pl={7} $gap={8}>
            <LargeBtn $w={70}><IconArea><TrueSize /></IconArea>Истинный<br />размер</LargeBtn>
            <SmallCol>
              <SmallItem><IconSlot><FitPage /></IconSlot>Страница целиком</SmallItem>
              <SmallItem><IconSlot><FitWidth /></IconSlot>По ширине</SmallItem>
              <SmallItem><IconSlot><FitVisible /></IconSlot>Подогнать видимую область</SmallItem>
            </SmallCol>
            <LargeBtn $w={70}><IconArea><Reverse /></IconArea>Обратный<br />порядок</LargeBtn>
            <SmallCol $ml={1}>
              <SmallItem><IconSlot><ZoomGlass /></IconSlot><ZoomCombo>200%<Caret /></ZoomCombo><ZoomGlass plus /></SmallItem>
              <SmallItem><IconSlot><Rotate /></IconSlot>Повернуть влево</SmallItem>
              <SmallItem><IconSlot><Rotate right /></IconSlot>Повернуть вправо</SmallItem>
            </SmallCol>
          </GroupBody>
          <GroupLabel>Вид</GroupLabel>
        </Group>
        <Group $w={195}>
          <GroupBody $pl={5} $gap={5}>
            <LargeBtn $w={74}><IconArea><Typewriter /></IconArea>Пишущая<br />машинка</LargeBtn>
            <LargeBtn $w={100}><IconArea><Highlight /></IconArea>Подсвеченный</LargeBtn>
          </GroupBody>
          <GroupLabel>Комментарий</GroupLabel>
        </Group>
        <Group $w={227}>
          <GroupBody $pl={7} $gap={7}>
            <LargeBtn $w={50}><IconArea><FromFile /></IconArea>Из<br />файла</LargeBtn>
            <SmallCol>
              <SmallItem><IconSlot><Scanner /></IconSlot>Из сканера</SmallItem>
              <SmallItem><IconSlot><NewIcon /></IconSlot>Пустой</SmallItem>
              <SmallItem $off><IconSlot><Clipboard off /></IconSlot>Из буфера обмена</SmallItem>
            </SmallCol>
          </GroupBody>
          <GroupLabel>Создать</GroupLabel>
        </Group>
        <Group $w={81}>
          <GroupBody $pl={2} $gap={0}>
            <LargeBtn $w={70}><IconArea><Sign /></IconArea>Подпись<br />PDF</LargeBtn>
          </GroupBody>
          <GroupLabel>Защитить</GroupLabel>
        </Group>
        <Group $w={103}>
          <GroupBody $pl={5} $gap={0}>
            <SmallCol>
              <SmallItem><IconSlot><LinkIcon /></IconSlot>Ссылка</SmallItem>
              <SmallItem><IconSlot><BookmarkIcon /></IconSlot>Закладка</SmallItem>
            </SmallCol>
          </GroupBody>
          <GroupLabel>Ссылки</GroupLabel>
        </Group>
        <Group $w={228}>
          <GroupBody $pl={8} $gap={0}>
            <SmallCol>
              <SmallItem><IconSlot><AttachFile /></IconSlot>Вложенный файл</SmallItem>
              <SmallItem><IconSlot><ImageAnno /></IconSlot>Аннотация к изображению</SmallItem>
              <SmallItem><IconSlot><VideoIcon /></IconSlot>Аудио и видео</SmallItem>
            </SmallCol>
          </GroupBody>
          <GroupLabel>Вставка</GroupLabel>
        </Group>
        <Collapse><Chevron /></Collapse>
      </Ribbon>

      <TabBar>
        <DocTab $w={190}><TabTitle>Начать</TabTitle></DocTab>
        <DocTab $w={239} $on><TabTitle>phpmmQl2q_pourochka-...</TabTitle><TabClose>✕</TabClose></DocTab>
        <TabDrop><Caret $s={6} $c="#111" /></TabDrop>
        <Banner>
          Free PDF to Word<br />Converter
          <BannerBadge $c="#e03a2c" $r={25} $t={2}>PDF</BannerBadge>
          <BannerArrow width="16" height="14" viewBox="0 0 16 14"><path d="M3 0v7h6V3l6 5-6 5V10H1V0z" fill="#fff" /></BannerArrow>
          <BannerBadge $c="#1ea1ec" $r={1} $t={20}>Word</BannerBadge>
        </Banner>
      </TabBar>

      <Main>
        <SideBar>
          <SideArrow><SideArrowIcon /></SideArrow>
          <SideIcons>
            <SideBookmarks /><SidePages /><SideLayers /><SideComments /><SideClip /><SideLock /><SideSign />
          </SideIcons>
        </SideBar>
        <Canvas $w={374} $line><SashDots /></Canvas>
        <Page>
          <TopMarks><Bars /></TopMarks>
          <Line $mt={14} $ind={73}>
            в) <Abs><Vec>BA</Vec></Abs><TightOp>+</TightOp><Abs><Vec>BC</Vec></Abs><TightOp>=</TightOp>14;&nbsp; <Abs><Vec>BA</Vec><TightOp>+</TightOp><Vec>BC</Vec></Abs><TightOp>=</TightOp>10.
          </Line>
          <TaskTitle $mt={27}>Задача № 117</TaskTitle>
          <Line $mt={2} $ind={37} $j>Используя правило параллелограмма, постройте векторы</Line>
          <Line $mt={12} $pr={203} $j>
            &nbsp;<Vec>OP</Vec><Op>=</Op><Sym>x</Sym><Op>+</Op><Sym>y</Sym> и <Vec>CT</Vec><Op>=</Op><Sym>y</Sym><Op>+</Op><Sym>x</Sym>. Докажите, что <Vec>OC</Vec><Op>=</Op><Vec>PT</Vec>.
            <Scan>'</Scan>
          </Line>
          <FigRow>
            <TextCol>
              <Line $ind={37}><It>Решение</It> (рис. 53):</Line>
              <Line $mt={13} $ind={73} $j>Отложим от точки <It>O</It> векторы <Vec>OA</Vec><Op>=</Op><Sym>x</Sym> и</Line>
              <Line $mt={18} $ind={41} $j><Vec>OB</Vec><Op>=</Op><Sym>y</Sym>. Построим точку <It>P</It> так, чтобы четы-</Line>
              <Line $mt={7} $ind={37} $j>рехугольник <It>OAPB</It> был параллелограммом,</Line>
              <Line $mt={1} $ind={37} $j>тогда по правилу параллелограмма</Line>
              <Line $mt={12} $ind={41} $j><Vec>OP</Vec><Op>=</Op><Sym>x</Sym><Op>+</Op><Sym>y</Sym>. Отложим от точки <It>C</It> векторы</Line>
              <Line $mt={17} $ind={41} $j><Vec>CM</Vec><Op>=</Op><Sym>y</Sym> и <Vec>CE</Vec><Op>=</Op><Sym>x</Sym>. Построим параллелограмм</Line>
              <Line $mt={8} $ind={37} $j><It>CMTE</It>, тогда по правилу параллелограмма</Line>
              <Line $mt={10} $ind={41}><Vec>CT</Vec><Op>=</Op><Sym>y</Sym><Op>+</Op><Sym>x</Sym>.</Line>
              <Line $mt={19} $ind={73} $pr={8} $j>Т. к. <Vec>OP</Vec><TightOp>=</TightOp><Sym>x</Sym><TightOp>+</TightOp><Sym>y</Sym> , <Vec>CT</Vec><TightOp>=</TightOp><Sym>y</Sym><TightOp>+</TightOp><Sym>x</Sym> и <Sym>x</Sym><TightOp>+</TightOp><Sym>y</Sym><TightOp>=</TightOp><Sym>y</Sym><TightOp>+</TightOp><Sym>x</Sym></Line>
            </TextCol>
            <Fig53 />
          </FigRow>
          <Line $mt={17} $ind={37} $j>(переместительный закон сложения векторов), то <Vec>OP</Vec><TightOp>=</TightOp><Vec>CT</Vec>. Сле-</Line>
          <Line $mt={4} $ind={37} $j>довательно, четырехугольник <It>OPTC</It> – параллелограмм, а потому</Line>
          <Line $mt={9} $ind={41}><Vec>OC</Vec><Op>=</Op><Vec>PT</Vec>,&nbsp; что и требовалось доказать.</Line>
          <HeadLine $mt={14}>III. Актуализация знаний учащихся</HeadLine>
          <TaskTitle $mt={9}>Фронтальная работа с классом</TaskTitle>
          <Line $ind={40}>1. Упростите выражения:</Line>
        </Page>
        <Canvas $w={366} />
        <Scroll><ArrowUp /><Thumb /><ArrowUp down /></Scroll>
      </Main>

      <StatusBar>
        <StatusItem $ml={0}><First /></StatusItem>
        <StatusItem $ml={18}><Prev /></StatusItem>
        <PageBox>29 / 318<Caret /></PageBox>
        <StatusItem $ml={12}><Prev next /></StatusItem>
        <StatusItem $ml={18}><First last /></StatusItem>
        <StatusItem $ml={14}><GoBack /></StatusItem>
        <StatusItem $ml={12}><GoFwd /></StatusItem>
        <StatusItem $ml={397}><ViewSlot $w={32}><ViewSingle /></ViewSlot></StatusItem>
        <StatusItem $ml={0}><ViewSlot $w={30} $on><ViewCont /></ViewSlot></StatusItem>
        <StatusItem $ml={0}><ViewSlot $w={33}><ViewFacing /></ViewSlot></StatusItem>
        <StatusItem $ml={0}><ViewSlot $w={33}><ViewFacingCont /></ViewSlot></StatusItem>
        <ZoomText>200%</ZoomText>
        <StatusItem $ml={4}><Caret /></StatusItem>
        <StatusItem $ml={4}><Circle /></StatusItem>
        <Slider><SliderTick /><SliderThumb /></Slider>
        <StatusItem $ml={0}><Circle plus /></StatusItem>
      </StatusBar>

      <TaskBar>
        <TaskSlot $w={60}><WinLogo /></TaskSlot>
        <TaskSlot $w={60}><TaskSearch /></TaskSlot>
        <TaskSlot $w={60}><Cortana /></TaskSlot>
        <TaskSlot $w={60}><TaskView /></TaskSlot>
        <TaskSlot $w={80}><Alice /></TaskSlot>
        <TaskSep />
        <TaskSlot><Edge /></TaskSlot>
        <TaskSlot><SIcon /></TaskSlot>
        <TaskSlot $open><Explorer /></TaskSlot>
        <TaskSlot><MailIcon /></TaskSlot>
        <TaskSlot><Dropbox /></TaskSlot>
        <TaskSlot $open><Yandex /></TaskSlot>
        <TaskSlot $active $open><FoxitTask /></TaskSlot>
        <TaskSlot $open><WordIcon /></TaskSlot>
        <Tray>
          <Weather><Cloud />9°C&nbsp; В осн. облачно</Weather>
          <TrayIcon $w={30}><TrayUp /></TrayIcon>
          <TrayIcon $w={30}><Battery /></TrayIcon>
          <TrayIcon $w={30}><Mic /></TrayIcon>
          <TrayIcon $w={31}><Wifi /></TrayIcon>
          <TrayIcon $w={28}><Speaker /></TrayIcon>
          <Lang>РУС</Lang>
          <Clock>3:59<br />09.09.2021</Clock>
          <Notif><Note /><NotifBadge>1</NotifBadge></Notif>
        </Tray>
      </TaskBar>
    </Window>
  );
}
